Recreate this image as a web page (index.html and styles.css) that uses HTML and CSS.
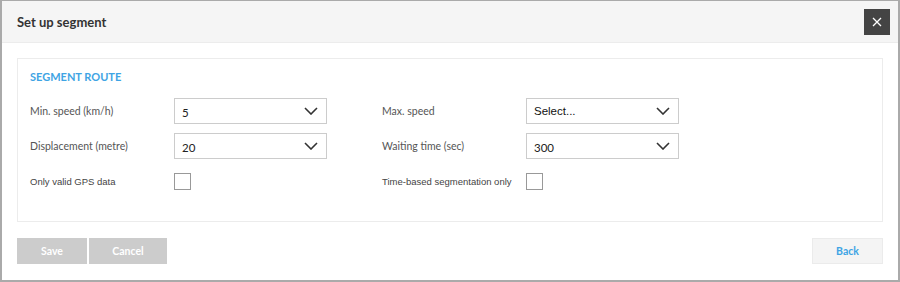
FILE: index.html
```html
<!DOCTYPE html>
<html>
  <head>
    <title>Set up segment</title>
    <link rel="stylesheet" href="styles.css">
  </head>
  <body>
    <div class="modal">
      <div class="modal-header">
        <h2 class="modal-title">Set up segment</h2>
        <button class="close-btn" type="button">
          <svg width="10" height="10" viewBox="0 0 10 10"><path d="M1 1L9 9M9 1L1 9" stroke="#fff" stroke-width="1.3"/></svg>
        </button>
      </div>
      <div class="modal-body">
        <div class="panel">
          <h3 class="panel-title">SEGMENT ROUTE</h3>
          <div class="grid">
            <div class="field">
              <label class="lbl">Min. speed (km/h)</label>
              <div class="select"><span>5</span>
                <svg width="14" height="8" viewBox="0 0 14 8"><path d="M1 1L7 7L13 1" fill="none" stroke="#333" stroke-width="1.6"/></svg>
              </div>
            </div>
            <div class="field">
              <label class="lbl">Max. speed</label>
              <div class="select"><span class="placeholder">Select...</span>
                <svg width="14" height="8" viewBox="0 0 14 8"><path d="M1 1L7 7L13 1" fill="none" stroke="#333" stroke-width="1.6"/></svg>
              </div>
            </div>
            <div class="field">
              <label class="lbl">Displacement (metre)</label>
              <div class="select"><span>20</span>
                <svg width="14" height="8" viewBox="0 0 14 8"><path d="M1 1L7 7L13 1" fill="none" stroke="#333" stroke-width="1.6"/></svg>
              </div>
            </div>
            <div class="field">
              <label class="lbl">Waiting time (sec)</label>
              <div class="select"><span>300</span>
                <svg width="14" height="8" viewBox="0 0 14 8"><path d="M1 1L7 7L13 1" fill="none" stroke="#333" stroke-width="1.6"/></svg>
              </div>
            </div>
            <div class="field">
              <label class="lbl small">Only valid GPS data</label>
              <div class="check"></div>
            </div>
            <div class="field">
              <label class="lbl small">Time-based segmentation only</label>
              <div class="check"></div>
            </div>
          </div>
        </div>
        <div class="actions">
          <div class="left-btns">
            <button class="btn btn-grey save" type="button">Save</button>
            <button class="btn btn-grey cancel" type="button">Cancel</button>
          </div>
          <button class="btn btn-back" type="button">Back</button>
        </div>
      </div>
    </div>
  </body>
</html>
```

FILE: styles.css
```css
html, body {
  margin: 0;
  padding: 0;
  background: #fff;
}

body {
  font-family: Lato, "Liberation Sans", sans-serif;
  color: #444;
}

.modal {
  width: 900px;
  height: 282px;
  box-sizing: border-box;
  border: 2px solid #aaa;
  border-top: 1px solid #aaa;
  background: #fff;
}

.modal-header {
  height: 41px;
  background: #f5f5f5;
  border-bottom: 1px solid #ececec;
  display: flex;
  align-items: center;
  justify-content: space-between;
  padding: 0 8px 0 15px;
}

.modal-title {
  margin: 0;
  font-size: 13px;
  font-weight: bold;
  color: #333;
}

.close-btn {
  width: 26px;
  height: 26px;
  background: #444;
  border: none;
  padding: 0;
  display: flex;
  align-items: center;
  justify-content: center;
  margin-top: 1px;
}

.modal-body {
  padding: 15px 15px 0 15px;
}

.panel {
  height: 164px;
  box-sizing: border-box;
  border: 1px solid #ececec;
  padding: 11px 12px 0 12px;
}

.panel-title {
  margin: 0 0 14px 0;
  font-size: 11px;
  font-weight: bold;
  color: #3ea4e4;
  line-height: 14px;
}

.grid {
  display: grid;
  grid-template-columns: 352px 300px;
  row-gap: 9px;
}

.field {
  display: flex;
  align-items: center;
  height: 26px;
}

.lbl {
  width: 144px;
  flex-shrink: 0;
  font-size: 10.5px;
  color: #555;
}

.small {
  font-family: "Liberation Sans", Arial, sans-serif;
  font-size: 9.5px;
  color: #444;
}

.select {
  width: 153px;
  height: 26px;
  box-sizing: border-box;
  border: 1px solid #ccc;
  display: flex;
  align-items: center;
  justify-content: space-between;
  padding: 2px 8px 0 7px;
  font-size: 11.5px;
  color: #222;
}

.placeholder {
  font-family: "Liberation Sans", Arial, sans-serif;
  font-size: 11.5px;
  color: #111;
  margin-top: -2px;
}

.select svg {
  margin-top: -2px;
}

.check {
  width: 17px;
  height: 17px;
  box-sizing: border-box;
  border: 1px solid #999;
  margin-top: 1px;
}

.actions {
  display: flex;
  justify-content: space-between;
  margin-top: 16px;
}

.left-btns {
  display: flex;
  gap: 2px;
}

.btn {
  height: 26px;
  border: none;
  font-family: Lato, "Liberation Sans", sans-serif;
  font-size: 10.5px;
  font-weight: bold;
  padding: 0;
}

.btn-grey {
  background: #ccc;
  color: #fff;
}

.save {
  width: 70px;
}

.cancel {
  width: 78px;
}

.btn-back {
  width: 71px;
  background: #f4f4f4;
  border: 1px solid #ebebeb;
  color: #3ea4e4;
}
```
